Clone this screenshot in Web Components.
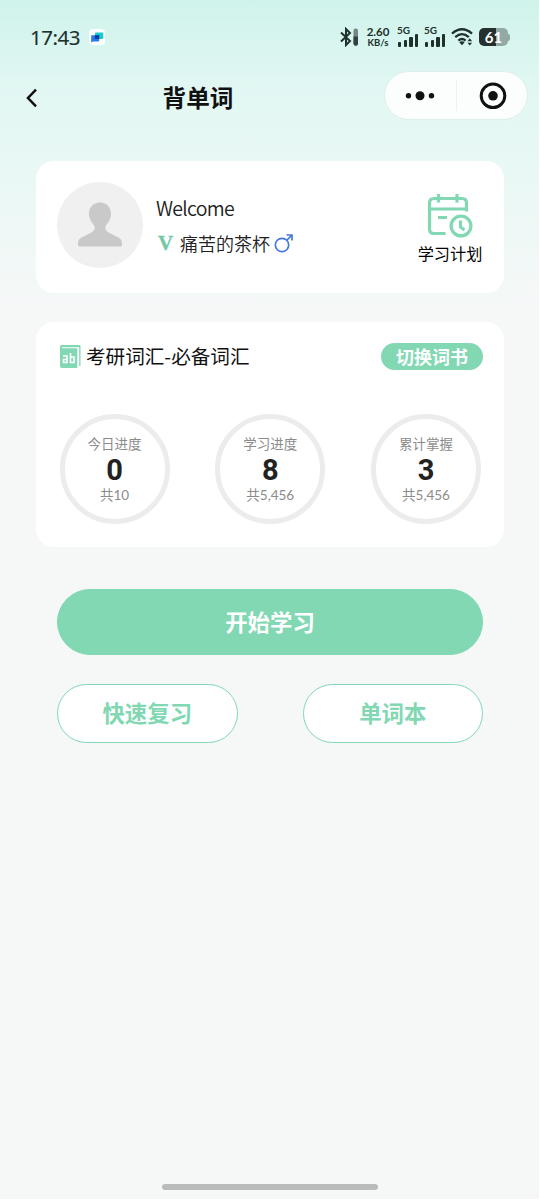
<!DOCTYPE html>
<html lang="zh-CN">
<head>
<meta charset="utf-8">
<title>背单词</title>
<style>
html,body{margin:0;height:100%}
body{background:#fff;font-family:"Noto Sans CJK SC",sans-serif;color:#222;--green:#81d8b3}
</style>
</head>
<body>
<word-app></word-app>
<script>
const define=(name,html)=>customElements.define(name,class extends HTMLElement{
  constructor(){
    super();
    const t=document.createElement('template');
    t.innerHTML=html;
    this.attachShadow({mode:'open'}).append(t.content.cloneNode(true));
  }
});

define('status-bar',`<style>
:host{display:flex;height:74px;box-sizing:border-box;padding:0 29px 0 30px;align-items:center;color:#20302d;font-family:Lato,sans-serif}
.time{font:400 20.5px/24px "Noto Sans",sans-serif;width:59px;letter-spacing:-.5px;-webkit-text-stroke:.1px #20302d;margin-top:-1px}
.net{margin-left:7px;width:24px;font-size:11.5px;font-weight:700;line-height:11px;text-align:center;white-space:nowrap;display:flex;flex-direction:column;align-items:center}
.net span:last-child{font-size:9.5px}
.sig{width:22px;height:22px;margin-left:5px;display:flex;flex-direction:column;font-size:10px;line-height:9px;font-weight:700;margin-top:-1px}
.bars{display:flex;align-items:flex-end;gap:2.3px;height:12px;margin:0 0 0 1px}
.bars i{width:3.4px;background:#20302d;border-radius:1px}
.battery{margin-left:5px;width:29px;height:18px;border-radius:5px;background:linear-gradient(90deg,#26302f 60%,#92aaa6 60%);color:#fff;font-size:15px;line-height:18px;font-weight:700;text-align:center}
.nub{width:2px;height:7px;background:#92aaa6;border-radius:0 2px 2px 0}
svg{display:block;flex:none}
</style>
<div class="time">17:43</div>
<svg width="16" height="16" viewBox="0 0 16 16"><rect width="16" height="16" rx="4" fill="#fff"/><rect x="6" y="3.5" width="8.3" height="6.5" rx="1" fill="#16cbd0"/><path d="M2.5 6.2h7.7v5.2q0 1-1 1H4l-1.800 1V6.700z" fill="#2679ed"/><path d="M6 6.200h4.200V10H6z" fill="#113b9b"/></svg>
<svg style="margin-left:auto" width="20" height="20" viewBox="0 0 20 20"><path d="M2 5.500 11 14l-4 4V2l4 4-9 8.500" fill="none" stroke="#20302d" stroke-width="2"/><rect x="14.500" y="1.500" width="4.500" height="17" rx="2" fill="#738783"/><path d="M14.500 9.500H19v7a2 2 0 0 1-4.500 0z" fill="#33413f"/></svg>
<div class="net"><span>2.60</span><span>KB/s</span></div>
<div class="sig" style="margin-left:7px"><span>5G</span><div class="bars"><i style="height:5px"></i><i style="height:7px"></i><i style="height:10px"></i><i style="height:13px"></i></div></div>
<div class="sig"><span>5G</span><div class="bars"><i style="height:5px"></i><i style="height:7px"></i><i style="height:10px"></i><i style="height:13px"></i></div></div>
<svg style="margin-left:5px" width="23" height="20" viewBox="0 0 23 20"><g fill="none" stroke="#20302d" stroke-width="2.300"><path d="M1 6.600Q11 -2 21 6.600M4.200 10.100q6.800-6 13.600 0M7.400 13.600q3.600-3.200 7.200 0"/></g><path d="M8.300 15.200q2.700-2 5.400 0L11 18.300zM16.500 14.200l2.300-2.900 2.300 2.900zM16.500 15.700h4.600l-2.300 2.900z" fill="#20302d"/></svg>
<div class="battery">61</div><div class="nub"></div>`);

define('nav-bar',`<style>
:host{display:flex;height:48px;margin-top:-3px;padding:0 11px 0 26px;align-items:center}
.title{width:340px;text-align:center;font-size:23.600px;line-height:36px;font-weight:700;color:#111;margin:3px 0 0 -10px}
.capsule{display:flex;align-items:center;width:142px;height:47px;border:1px solid #dcefeb;border-radius:25px;background:#fbfefd;margin-left:auto}
.line{width:1px;height:31px;background:#edf2f1}
svg{display:block;flex:none}
</style>
<svg style="margin-top:5px" width="12" height="20" viewBox="0 0 12 20"><path d="m10 1.700-8 8.300 8 8.300" fill="none" stroke="#111" stroke-width="2.500"/></svg>
<div class="title">背单词</div>
<div class="capsule"><svg width="71" height="47" viewBox="0 0 71 47"><g fill="#111"><circle cx="23.500" cy="23.800" r="2.700"/><circle cx="35" cy="23.800" r="4.500"/><circle cx="46.500" cy="23.800" r="2.700"/></g></svg><div class="line"></div><svg width="70" height="47" viewBox="0 0 70 47"><circle cx="36" cy="23.800" r="11.800" fill="none" stroke="#111" stroke-width="3"/><circle cx="36" cy="23.800" r="4.800" fill="#111"/></svg></div>`);

define('user-card',`<style>
:host{display:flex;box-sizing:border-box;width:468px;height:132px;margin:42px 0 0 36px;padding:21px;background:#fff;border-radius:18px}
.info{margin-left:14px;flex:1}
.hello{font-weight:350;font-size:19.500px;letter-spacing:-.7px;line-height:28px;margin:12px 0 0 -1px;color:#222}
.name{display:flex;align-items:center;height:28px;margin:7px 0 0 -1px;font-size:18px;font-weight:350;color:#222}
.v{font:700 21px/28px "Liberation Serif",serif;color:#72c9a6;width:24px;text-indent:2px;-webkit-text-stroke:.4px #72c9a6}
.plan{display:flex;flex-direction:column;align-items:center;width:66px;font-size:16.200px;line-height:24px;color:#000;white-space:nowrap}
svg{display:block;flex:none}
</style>
<svg width="86" height="86" viewBox="0 0 86 86"><circle cx="43" cy="43" r="43" fill="#f0f0f0"/><path d="M43 20.500c7 0 11.200 5 11 12-.2 5-3 8-5.200 11.200-1.500 2.500 0 5 3.200 7l9.500 4.800c2.500 1.400 3.500 3.300 3.500 6v1.500q0 1.500-1.500 1.500h-41q-1.500 0-1.500-1.500v-1.500c0-2.700 1-4.600 3.500-6l9.500-4.800c3.200-2 4.700-4.500 3.200-7C35 40.500 32.200 37.500 32 32.500c-.2-7 4-12 11-12z" fill="#c9c9c9"/></svg>
<div class="info"><div class="hello">Welcome</div><div class="name"><span class="v">V</span><span>痛苦的茶杯</span><svg style="margin-left:4px" width="20" height="20" viewBox="0 0 20 20"><g fill="none" stroke="#4679de" stroke-width="1.700"><circle cx="8" cy="12" r="6.700"/><path d="M12.500 7.500 18 2M12.500 2H18v5.500"/></g></svg></div></div>
<div class="plan"><svg style="margin-top:11px" width="46" height="46" viewBox="0 0 46 46"><g fill="none" stroke="#81d8b3" stroke-width="3.200"><path d="M18.500 40.500H7q-4.500 0-4.500-4.500V10q0-4.500 4.500-4.500h28q4.500 0 4.500 4.500v8.500M3 16h36.500M11.500 1v8.500M30 1v8.500M11 24.500h9"/><circle cx="34" cy="33" r="9.900"/><path d="M33.500 27.500v6.500l4 3"/></g></svg><span style="margin-top:2px">学习计划</span></div>`);

define('progress-ring',`<style>
:host{display:flex;box-sizing:border-box;width:110px;height:110px;border:5px solid #ececec;border-radius:50%;flex-direction:column;align-items:center;color:#8b8b8b;font-family:Lato,"Noto Sans CJK SC",sans-serif;font-size:13.500px;font-weight:400;padding-top:15px}
.l{height:20px;line-height:20px}
.n{font:700 29px/33px Roboto,sans-serif;height:32px;color:#222}
.t{line-height:20px;height:20px;margin-top:-1px}
</style><div class="l"><slot name="label"></slot></div><div class="n"><slot></slot></div><div class="t"><slot name="total"></slot></div>`);

define('book-card',`<style>
:host{display:block;box-sizing:border-box;width:468px;height:225px;margin:29px 0 0 36px;padding:20px 21px 0 23px;background:#fff;border-radius:18px}
.head{display:flex;align-items:center;height:28px}
.book{font-size:19.600px;line-height:28px;color:#111;margin-left:4px;flex:1}
.switch{width:102px;height:27px;border-radius:14px;background:var(--green);color:#fff;text-align:center;font-weight:700;font-size:18px;line-height:26px}
.rings{display:flex;justify-content:space-between;margin:43.500px 2px 0 .5px}
svg{display:block}
</style>
<div class="head"><svg width="23" height="23" viewBox="0 0 23 23"><path d="M2.500 0h18q1 0 1 1v20h-1.300V2.200H3v1h15.300V23H3q-2 0-2-2V2q0-2 1.500-2z" fill="#81d8b3"/><g fill="none" stroke="#fff" stroke-width="1.600"><path d="M4 11h4v6.500H4.500v-3H8M11.500 8v9.500H15V12h-3.500"/></g></svg><div class="book">考研词汇-必备词汇</div><div class="switch">切换词书</div></div>
<div class="rings">
<progress-ring><span slot="label">今日进度</span>0<span slot="total">共10</span></progress-ring>
<progress-ring><span slot="label">学习进度</span>8<span slot="total">共5,456</span></progress-ring>
<progress-ring><span slot="label">累计掌握</span>3<span slot="total">共5,456</span></progress-ring>
</div>`);

define('pill-button',`<style>
:host{display:flex;box-sizing:border-box;align-items:center;justify-content:center;width:180.500px;height:59px;border:1.500px solid var(--green);border-radius:34px;background:#fff;color:var(--green);font-size:22.400px;font-weight:700;padding-bottom:2px}
:host([primary]){width:426px;height:66px;background:var(--green);color:#fff}
</style><slot></slot>`);

define('word-app',`<style>
:host{display:flex;flex-direction:column;width:539px;height:1199px;background:linear-gradient(180deg,#cff3eb 0,#e2f7f3 90px,#e8f8f4 160px,#f6f8f8 310px)}
.actions{display:flex;flex-direction:column;width:426px;margin:42px 0 0 57px;gap:28.500px}
.row{display:flex;justify-content:space-between}
.home{width:216px;height:6px;border-radius:3px;background:#b9bcbb;margin:auto 0 9px 162px}
</style>
<status-bar></status-bar><nav-bar></nav-bar><user-card></user-card><book-card></book-card>
<div class="actions"><pill-button primary>开始学习</pill-button><div class="row"><pill-button>快速复习</pill-button><pill-button>单词本</pill-button></div></div>
<div class="home"></div>`);
</script>
</body>
</html>
